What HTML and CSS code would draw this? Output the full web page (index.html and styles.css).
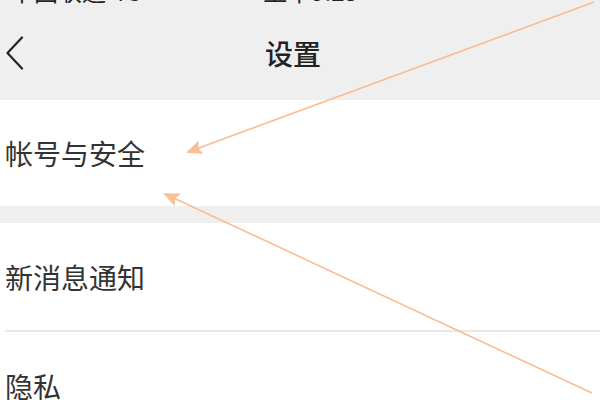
FILE: index.html
```html
<!DOCTYPE html>
<html lang="zh-CN">
<head>
<meta charset="utf-8">
<link rel="stylesheet" href="styles.css">
</head>
<body>
<div class="page">
  <div class="header">
    <div class="status">
      <span class="carrier">卡中国联通 4G</span>
      <span class="clock">上午9:25</span>
    </div>
    <div class="nav">
      <svg class="back" width="20" height="34" viewBox="0 0 20 34">
        <polyline points="17,1.5 2.5,17 17,32.5" fill="none" stroke="#222" stroke-width="2.2" stroke-linecap="round" stroke-linejoin="round"/>
      </svg>
      <div class="title">设置</div>
    </div>
  </div>
  <div class="group">
    <div class="item">帐号与安全</div>
  </div>
  <div class="group">
    <div class="item">新消息通知</div>
    <div class="divider"></div>
    <div class="item">隐私</div>
  </div>
  <svg class="arrows" width="600" height="400" viewBox="0 0 600 400">
    <defs>
      <marker id="head" markerWidth="16" markerHeight="14" refX="14" refY="7" orient="auto" markerUnits="userSpaceOnUse">
        <polygon points="0,0 16,7 0,14 3,7" fill="#f9bf96"/>
      </marker>
    </defs>
    <line x1="594" y1="2" x2="188" y2="152" stroke="#f8bd94" stroke-width="1.6" marker-end="url(#head)"/>
    <line x1="592" y1="393" x2="165" y2="194" stroke="#f8bd94" stroke-width="1.6" marker-end="url(#head)"/>
  </svg>
</div>
</body>
</html>
```
FILE: styles.css
```css
html, body {
  margin: 0;
  padding: 0;
}
body {
  background: #efefef;
  font-family: "Noto Sans CJK SC", "Noto Sans", sans-serif;
  overflow: hidden;
}
.page {
  position: relative;
  width: 600px;
  height: 400px;
  overflow: hidden;
}
.header {
  background: #efefef;
  height: 100px;
  display: flex;
  flex-direction: column;
}
.status {
  height: 6px;
  overflow: hidden;
  display: flex;
  align-items: flex-end;
  font-size: 24px;
  color: #222;
  white-space: nowrap;
}
.status span {
  line-height: 24px;
  margin-bottom: 3px;
}
.carrier {
  margin-left: -14px;
}
.clock {
  margin-left: 122px;
}
.nav {
  flex: 1;
  display: flex;
  align-items: center;
  position: relative;
  padding-left: 5px;
}
.back {
  display: block;
}
.title {
  position: absolute;
  left: 265px;
  top: 0;
  bottom: 0;
  display: flex;
  align-items: center;
  font-size: 28px;
  font-weight: 500;
  color: #222;
  padding-bottom: 1px;
}
.group {
  background: #fff;
  margin-bottom: 17px;
}
.item {
  height: 106px;
  display: flex;
  align-items: center;
  padding-left: 5px;
  font-size: 28px;
  color: #333;
}
.group + .group .item {
  height: 107px;
}
.divider {
  height: 2px;
  margin-left: 5px;
  background: #e8e8e8;
}
.arrows {
  position: absolute;
  left: 0;
  top: 0;
  pointer-events: none;
}
```
